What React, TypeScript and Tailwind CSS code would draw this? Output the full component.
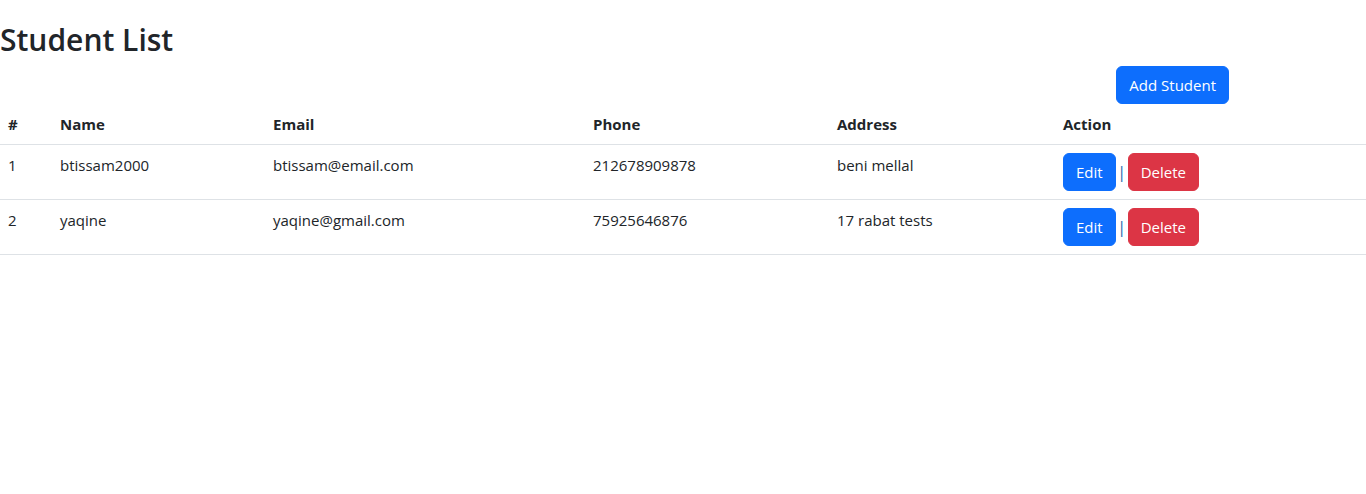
import React from "react";

const students = [
  { id: 1, name: "btissam2000", email: "btissam@email.com", phone: "212678909878", address: "beni mellal" },
  { id: 2, name: "yaqine", email: "yaqine@gmail.com", phone: "75925646876", address: "17 rabat tests" },
];

export default function App() {
  return (
    <div className="min-h-[494px] bg-white text-[#212529] text-[15px] leading-[24px]" style={{ fontFamily: '"Open Sans", "Noto Sans", sans-serif' }}>
      <h2 className="pt-[21px] text-[30px] leading-[38.4px] font-semibold mb-[7px]">Student List</h2>
      <div className="flex justify-end pr-[137px]">
        <button className="bg-[#0d6efd] text-white rounded-[6px] px-[12px] leading-[24px] h-[38px] border border-[#0d6efd]">Add Student</button>
      </div>
      <table className="w-full border-collapse">
        <thead>
          <tr className="border-b border-[#dee2e6] text-left">
            <th className="w-[52px] p-[8px] font-bold">#</th>
            <th className="w-[213px] p-[8px] font-bold">Name</th>
            <th className="w-[320px] p-[8px] font-bold">Email</th>
            <th className="w-[244px] p-[8px] font-bold">Phone</th>
            <th className="w-[226px] p-[8px] font-bold">Address</th>
            <th className="p-[8px] font-bold">Action</th>
          </tr>
        </thead>
        <tbody>
          {students.map((s) => (
            <tr key={s.id} className="border-b border-[#dee2e6]">
              <td className="p-[8px] align-top">{s.id}</td>
              <td className="p-[8px] align-top">{s.name}</td>
              <td className="p-[8px] align-top">{s.email}</td>
              <td className="p-[8px] align-top">{s.phone}</td>
              <td className="p-[8px] align-top">{s.address}</td>
              <td className="p-[8px] align-top">
                <div className="flex items-center">
                  <button className="bg-[#0d6efd] text-white rounded-[6px] px-[12px] h-[38px] border border-[#0d6efd]">Edit</button>
                  <span className="mx-[3px] w-[6px] flex justify-center text-[#2f6fae] text-[17px]">|</span>
                  <button className="bg-[#dc3545] text-white rounded-[6px] px-[12px] h-[38px] border border-[#dc3545]">Delete</button>
                </div>
              </td>
            </tr>
          ))}
        </tbody>
      </table>
    </div>
  );
}
